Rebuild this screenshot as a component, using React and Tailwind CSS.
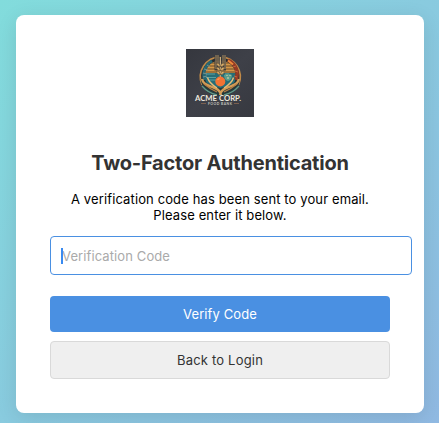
function Logo() {
  return (
    <svg width="68" height="68" viewBox="0 0 68 68" className="block" aria-label="Acme Corp Food Bank">
      <defs>
        <linearGradient id="tile" x1="0" y1="0" x2="1" y2="1">
          <stop offset="0" stopColor="#35373e" />
          <stop offset="0.5" stopColor="#3e4048" />
          <stop offset="1" stopColor="#373940" />
        </linearGradient>
        <clipPath id="scene"><circle cx="34.3" cy="27" r="15.5" /></clipPath>
      </defs>
      <rect width="68" height="68" fill="url(#tile)" />
      <circle cx="34.3" cy="28" r="19" fill="#252b30" />
      <path d="M16 36A20 20 0 1 1 52.6 36" fill="none" stroke="#c18a48" strokeWidth="1.6" />
      <g clipPath="url(#scene)">
        <rect x="17" y="11" width="35" height="13" fill="#d49747" />
        <path d="M17 14H52M17 17H52M17 20H52M17 23H52" stroke="#684c2c" strokeWidth="1" />
        <rect x="17" y="24" width="35" height="20" fill="#266d77" />
        <path d="M20 25h9M20 28.5h10M23 31h7M39 25h4" stroke="#5aa1a0" strokeWidth="1" />
      </g>
      <path d="M18.5 31C16 23 20 15 26 12" fill="none" stroke="#286773" strokeWidth="3" />
      <path d="M17 28l4-1M17 24l4 1M18 20l4 1M21 16l3 2" stroke="#78928b" strokeWidth="1" />
      <path d="M42 11C50 15 53 23 50 31" fill="none" stroke="#943b25" strokeWidth="3.6" />
      <path d="M42 11.5l5 4" stroke="#ef8b3b" strokeWidth="2" />
      <path d="M47 18l3-1M49 22l3 1M48 27l3 1" stroke="#c76238" strokeWidth="1" />
      <path d="M38 26q4-3 8 0q0 5-4 6q-4-1-4-6Z" fill="#5b9d8c" />
      <path d="M41 26v1M44 26v1M41 29h2" stroke="#dedbad" strokeWidth="1" />
      <rect x="28.5" y="6.5" width="11.5" height="15" fill="#34363a" opacity=".9" />
      <path d="M30 6v14M32 6v10M37 6v10M39 6v14" stroke="#c5a16c" strokeWidth=".8" />
      <path d="M34.3 8v21" stroke="#e7c58c" strokeWidth="1.1" />
      <path d="M34.3 18q-4-1-4-4q4 0 4 4q0-4 4-4q1 3-4 4m0 4q-4-1-4-4q4 0 4 4q0-4 4-4q1 3-4 4m0 4q-4-1-4-4q4 0 4 4q0-4 4-4q1 3-4 4" fill="#e3b66f" stroke="#44382b" strokeWidth=".5" />
      <path d="M14.5 30Q24 37 34.3 39 45 37 54 30C53 40 47 46 37 47H32C22 46 16 40 14.5 30Z" fill="#26393a" />
      <circle cx="34.3" cy="32.5" r="5" fill="#f27333" />
      <path d="M31.5 30.5l2-.8" stroke="#ffae68" strokeWidth="1" />
      <path d="M16 30C17 35 21 36 26 38C31 40 34 41 35 46M53 30C52 35 48 36 43 38C38 40 35 41 34 46" fill="none" stroke="#d39d57" strokeWidth="2.4" />
      <path d="M21.5 28.5Q23 34 31 39M47.5 28.5Q46 34 38 39" fill="none" stroke="#e8bd79" strokeWidth="1.4" />
      <path d="M16 37Q22 44 31 46M53 37Q47 44 38 46" fill="none" stroke="#61998a" strokeWidth="1.3" />
      <path d="M18 35Q24 40 31 43M51 35Q45 40 38 43" fill="none" stroke="#b97e43" strokeWidth="1.1" />
      <text x="9" y="52" textLength="46" lengthAdjust="spacingAndGlyphs" fill="#eee9df" fontFamily="Lato, sans-serif" fontWeight="700" fontSize="7">ACME CORP.</text>
      <text x="22" y="55.9" textLength="24" lengthAdjust="spacing" fill="#c3c2bd" fontFamily="Lato, sans-serif" fontWeight="700" fontSize="3.4">FOOD BANK</text>
      <path d="M15 54.5h5M48 54.5h5" stroke="#8c6853" strokeWidth=".8" />
    </svg>
  );
}

export default function App() {
  return (
    <main className="h-[423px] w-[439px] overflow-hidden bg-[linear-gradient(135deg,#82dcdc_0%,#90b9e2_100%)] pl-4 pt-[15px] font-['Inter',sans-serif]">
      <section className="flex h-[398px] w-[408px] flex-col items-center rounded-lg bg-white p-[34px] shadow-[0_4px_20px_rgba(0,0,0,0.1)]">
        <Logo />
        <h1 className="mt-[34px] whitespace-nowrap text-[20px] leading-6 font-bold tracking-[-0.22px] text-[#333]">Two-Factor Authentication</h1>
        <p className="mt-4 whitespace-nowrap text-center text-[13px] leading-4 tracking-[0.12px] text-black">
          A verification code has been sent to your email.<br />Please enter it below.
        </p>
        <form className="mt-[13px] flex w-full flex-col" onSubmit={(e) => e.preventDefault()}>
          <div className="relative h-[39px] w-[362px]">
            <input aria-label="Verification Code" placeholder="Verification Code" className="h-full w-full rounded-[4px] border border-[#4a90e2] bg-white px-[11px] text-[13px] tracking-[0.1px] text-[#333] outline-none placeholder:text-[#aaa]" />
            <span className="absolute left-[11px] top-3 h-4 w-[2px] bg-[#398af0]" />
          </div>
          <button className="mt-[21px] h-9 w-full rounded-[4px] bg-[#4a90e2] pt-0.5 text-[13px] tracking-[0.1px] text-white">Verify Code</button>
          <button type="button" className="mt-[9px] h-[38px] w-full rounded-[4px] border border-[#d9d9d9] bg-[#efefef] pt-0.5 text-[13px] tracking-[0.2px] text-[#333]">Back to Login</button>
        </form>
      </section>
    </main>
  );
}
